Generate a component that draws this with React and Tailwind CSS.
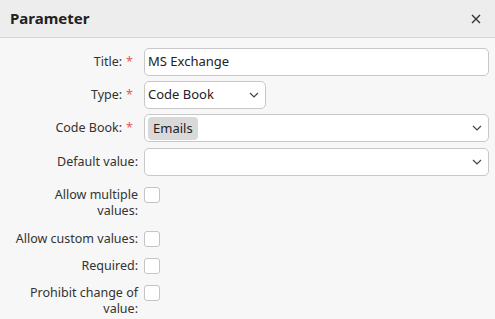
import React from "react";

const Chevron = () => (
  <svg width="10" height="6" viewBox="0 0 10 6" className="shrink-0">
    <path d="M1 1l4 4 4-4" fill="none" stroke="#444" strokeWidth="1.2" />
  </svg>
);

const Label = ({ children, req, multi }) => (
  <div
    className={`w-[138px] shrink-0 text-right text-[12.5px] text-[#333] ${multi ? "leading-[16px]" : ""} ${req ? "pr-[5px]" : ""}`}
  >
    {children}
    {req && <span className="text-[#dc5b5b] ml-[4px]">*</span>}
  </div>
);

const Check = () => (
  <div className="w-[16px] h-[16px] shrink-0 rounded-[3px] border border-[#c4c4c4] bg-white" />
);

export default function App() {
  return (
    <div
      className="w-[495px] h-[319px] bg-[#f7f7f7] overflow-hidden"
      style={{ fontFamily: '"Noto Sans", "Open Sans", sans-serif' }}
    >
      <div className="h-[38px] bg-[#ededed] border-b border-[#d6d6d6] flex items-center justify-between pl-[10px] pr-[14px]">
        <div className="text-[15px] font-bold text-[#222]">Parameter</div>
        <svg width="10" height="10" viewBox="0 0 10 10">
          <path d="M1 1l8 8M9 1l-8 8" stroke="#333" strokeWidth="1.4" />
        </svg>
      </div>
      <div className="pt-[10px] pr-[6px] flex flex-col">
        <div className="flex items-center gap-[6px] h-[28px]">
          <Label req>Title:</Label>
          <div className="flex-1 h-[28px] bg-white border border-[#c8c8c8] rounded-[5px] flex items-center pl-[3px] text-[13px] text-[#222]">
            MS Exchange
          </div>
        </div>
        <div className="flex items-center gap-[6px] h-[28px] mt-[5px]">
          <Label req>Type:</Label>
          <div className="w-[122px] h-[28px] bg-white border border-[#c8c8c8] rounded-[5px] flex items-center justify-between pl-[3px] pr-[6px] text-[13px] text-[#222]">
            <span>Code Book</span>
            <Chevron />
          </div>
        </div>
        <div className="flex items-center gap-[6px] h-[28px] mt-[5px]">
          <Label req>Code Book:</Label>
          <div className="flex-1 h-[28px] bg-white border border-[#c8c8c8] rounded-[5px] flex items-center justify-between pl-[3px] pr-[6px] text-[13px] text-[#222]">
            <span className="bg-[#d9d9d9] rounded-[4px] px-[5px] h-[23px] flex items-center mt-[1px]">Emails</span>
            <Chevron />
          </div>
        </div>
        <div className="flex items-center gap-[6px] h-[28px] mt-[6px]">
          <Label>Default value:</Label>
          <div className="flex-1 h-[28px] bg-white border border-[#c8c8c8] rounded-[5px] flex items-center justify-end pr-[6px]">
            <Chevron />
          </div>
        </div>
        <div className="flex items-start gap-[6px] mt-[11px]">
          <Label multi>
            Allow multiple
            <br />
            values:
          </Label>
          <Check />
        </div>
        <div className="flex items-start gap-[6px] mt-[12px]">
          <Label multi>Allow custom values:</Label>
          <Check />
        </div>
        <div className="flex items-start gap-[6px] mt-[11px]">
          <Label multi>Required:</Label>
          <Check />
        </div>
        <div className="flex items-start gap-[6px] mt-[11px]">
          <Label multi>
            Prohibit change of
            <br />
            value:
          </Label>
          <Check />
        </div>
      </div>
    </div>
  );
}
